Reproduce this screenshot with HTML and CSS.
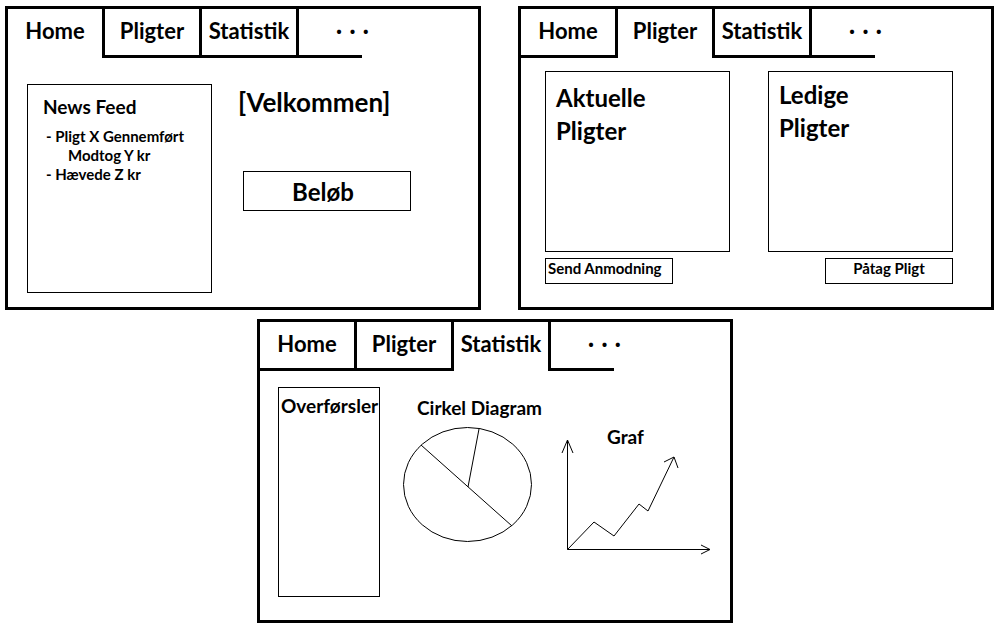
FILE: index.html
```html
<!DOCTYPE html>
<html lang="da">

<head>
    <meta charset="UTF-8">
    <meta name="viewport" content="width=device-width, initial-scale=1.0">
    <title>Pligter - skitse</title>
    <link rel="stylesheet" href="styles.css">
</head>

<body>
    <div class="board">
        <div class="row">
            <!-- Home -->
            <section class="panel">
                <div class="tabs">
                    <div class="tab active">Home</div>
                    <div class="tab">Pligter</div>
                    <div class="tab">Statistik</div>
                    <div class="tab more">· · ·</div>
                </div>
                <div class="home">
                    <div class="feed">
                        <div class="feed-title">News Feed</div>
                        <ul class="feed-list">
                            <li>- Pligt X Gennemført<span class="feed-sub">Modtog Y kr</span></li>
                            <li>- Hævede Z kr</li>
                        </ul>
                    </div>
                    <div class="welcome">
                        <div class="welcome-title">[Velkommen]</div>
                        <div class="amount">Beløb</div>
                    </div>
                </div>
            </section>

            <!-- Pligter -->
            <section class="panel">
                <div class="tabs">
                    <div class="tab">Home</div>
                    <div class="tab active">Pligter</div>
                    <div class="tab">Statistik</div>
                    <div class="tab more">· · ·</div>
                </div>
                <div class="duties">
                    <div class="duty-col">
                        <div class="duty-card">Aktuelle<br>Pligter</div>
                        <div class="duty-btn">Send Anmodning</div>
                    </div>
                    <div class="duty-col">
                        <div class="duty-card free">Ledige<br>Pligter</div>
                        <div class="duty-btn right">Påtag Pligt</div>
                    </div>
                </div>
            </section>
        </div>

        <div class="row row-bottom">
            <!-- Statistik -->
            <section class="panel">
                <div class="tabs">
                    <div class="tab">Home</div>
                    <div class="tab">Pligter</div>
                    <div class="tab active">Statistik</div>
                    <div class="tab more">· · ·</div>
                </div>
                <div class="stats">
                    <div class="transfers">Overførsler</div>

                    <div class="pie">
                        <div class="pie-title">Cirkel Diagram</div>
                        <svg width="130" height="123" viewBox="0 0 130 123">
                            <ellipse cx="64.5" cy="64.5" rx="64" ry="57" fill="none" stroke="#000" />
                            <line x1="18" y1="25" x2="109" y2="106" stroke="#000" />
                            <line x1="76" y1="9" x2="65" y2="67" stroke="#000" />
                        </svg>
                    </div>

                    <div class="graph">
                        <div class="graph-title">Graf</div>
                        <svg width="154" height="118" viewBox="0 0 154 118">
                            <g fill="none" stroke="#000">
                                <path d="M7.5 2 V111.5 H150" />
                                <path d="M2 15 L7.5 2 L13 15" />
                                <path d="M141 107 L150 111.5 L141 116" />
                                <path d="M7.5 111.5 L34 84 L54 98 L79 66 L88 73 L114 19" />
                                <path d="M104 24 L114 19 L118 30" />
                            </g>
                        </svg>
                    </div>
                </div>
            </section>
        </div>
    </div>
</body>

</html>
```

FILE: styles.css
```css
* {
    margin: 0;
    padding: 0;
    box-sizing: border-box;
    list-style: none;
}

body {
    background: #fff;
    color: #000;
    font-family: Lato, "Liberation Sans", sans-serif;
    font-weight: 700;
}

.board {
    padding: 6px 0 0 5px;
}

.row {
    display: flex;
    gap: 37px;
}

.row-bottom {
    margin-top: 9px;
    padding-left: 252px;
}

.panel {
    width: 476px;
    height: 304px;
    border: 3px solid #000;
    display: flex;
    flex-direction: column;
}

/* tabs */
.tabs {
    display: flex;
    height: 49px;
    flex-shrink: 0;
}

.tab {
    width: 100px;
    margin-left: -3px;
    border: 3px solid #000;
    border-top: 0;
    padding-top: 9px;
    font-size: 22px;
    line-height: 1.2;
    text-align: center;
    white-space: nowrap;
}

.tab.active {
    border-color: transparent;
}

.tab.more {
    width: 66px;
    border-right: 0;
    padding-left: 37px;
    text-align: left;
    letter-spacing: 1px;
}

/* home */
.home {
    display: flex;
    padding: 26px 0 0 19px;
}

.feed {
    width: 185px;
    height: 209px;
    border: 1px solid #000;
    padding: 11px 0 0 15px;
}

.feed-title {
    font-size: 19px;
    line-height: 1.2;
}

.feed-list {
    margin-top: 8px;
    padding-left: 3px;
    font-size: 15px;
    line-height: 19px;
}

.feed-sub {
    display: block;
    padding-left: 22px;
}

.welcome {
    margin-left: 26px;
    padding-top: 3px;
}

.welcome-title {
    font-size: 26px;
    line-height: 1.2;
}

.amount {
    margin: 53px 0 0 5px;
    width: 168px;
    height: 40px;
    border: 1px solid #000;
    padding-right: 8px;
    display: flex;
    align-items: center;
    justify-content: center;
    font-size: 24px;
}

/* pligter */
.duties {
    display: flex;
    gap: 38px;
    padding: 13px 0 0 24px;
}

.duty-col {
    width: 185px;
    display: flex;
    flex-direction: column;
}

.duty-card {
    height: 181px;
    border: 1px solid #000;
    padding: 9px 0 0 10px;
    font-size: 24px;
    line-height: 33px;
}

.duty-card.free {
    padding-top: 6px;
}

.duty-btn {
    margin-top: 6px;
    width: 128px;
    height: 26px;
    border: 1px solid #000;
    padding-left: 2px;
    font-size: 15px;
    line-height: 18px;
    white-space: nowrap;
}

.duty-btn.right {
    align-self: flex-end;
    padding-left: 0;
    text-align: center;
}

/* statistik */
.stats {
    display: flex;
    padding: 16px 0 0 18px;
}

.transfers {
    width: 102px;
    height: 210px;
    border: 1px solid #000;
    padding: 7px 0 0 2px;
    font-size: 19px;
    line-height: 1.2;
    white-space: nowrap;
}

.pie {
    width: 140px;
    margin: 10px 0 0 23px;
}

.pie-title {
    margin-left: 14px;
    font-size: 19px;
    line-height: 1.2;
    white-space: nowrap;
}

.pie svg,
.graph svg {
    display: block;
}

.graph {
    margin: 39px 0 0 17px;
}

.graph-title {
    margin-left: 47px;
    font-size: 19px;
    line-height: 1.2;
}

.graph svg {
    margin-top: -11px;
}
```
